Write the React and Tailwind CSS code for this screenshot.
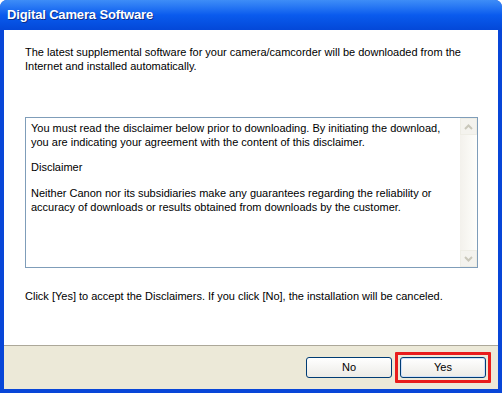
export default function App() {
  const font = { fontFamily: "'Liberation Sans', Arial, sans-serif" };

  return (
    <div
      className="w-[502px] h-[393px] flex flex-col bg-[#0846D8] rounded-t-[7px] overflow-hidden text-[11px] text-black"
      style={font}
    >
      {/* title bar */}
      <div className="h-[30px] flex items-center pl-[7px] bg-gradient-to-b from-[#3E8DF7] via-[#0A5BEE] to-[#0448D8]">
        <span className="text-white font-bold text-[13px] tracking-[-0.15px] [text-shadow:1px_1px_0_#0B2E8A]">
          Digital Camera Software
        </span>
      </div>

      <div className="flex-1 flex flex-col mx-[4px] mb-[4px]">
        {/* body */}
        <div className="flex-1 bg-white flex flex-col pl-[21px] pr-[20px] whitespace-nowrap">
          <p className="mt-[15px] leading-[14px]">
            The latest supplemental software for your camera/camcorder will be downloaded from the
            <br />
            Internet and installed automatically.
          </p>

          <div className="mt-[44px] h-[151px] border border-[#7F9DB9] flex">
            <div className="flex-1 pl-[5px] pt-[3px] leading-[14px]">
              <p>
                You must read the disclaimer below prior to downloading. By initiating the download,
                <br />
                you are indicating your agreement with the content of this disclaimer.
              </p>
              <p className="mt-[11px]">Disclaimer</p>
              <p className="mt-[12px]">
                Neither Canon nor its subsidiaries make any guarantees regarding the reliability or
                <br />
                accuracy of downloads or results obtained from downloads by the customer.
              </p>
            </div>
            <div className="w-[17px] flex flex-col bg-gradient-to-r from-[#F3F1EC] to-[#FEFEFB]">
              <div className="h-[17px] border border-[#EEEDE5] bg-[#F4F3EE] flex items-center justify-center">
                <svg width="9" height="6" viewBox="0 0 9 6">
                  <path d="M1 5 L4.5 1.5 L8 5" fill="none" stroke="#C9C7BA" strokeWidth="2" />
                </svg>
              </div>
              <div className="flex-1" />
              <div className="h-[17px] border border-[#EEEDE5] bg-[#F4F3EE] flex items-center justify-center">
                <svg width="9" height="6" viewBox="0 0 9 6">
                  <path d="M1 1 L4.5 4.5 L8 1" fill="none" stroke="#C9C7BA" strokeWidth="2" />
                </svg>
              </div>
            </div>
          </div>

          <p className="mt-[21px] leading-[14px]">
            Click [Yes] to accept the Disclaimers. If you click [No], the installation will be canceled.
          </p>
        </div>

        {/* footer */}
        <div className="h-[44px] bg-[#ECE9D8] border-t border-[#ACA899] flex items-center justify-end pr-[7px] gap-[3px]">
          <button className="w-[86px] h-[21px] rounded-[3px] border border-[#003C74] bg-gradient-to-b from-[#FFFFFF] to-[#ECEBE6] text-[11px]">
            No
          </button>
          <div className="border-[3px] border-[#E81C1C] p-[2px] rounded-[1px]">
            <button className="w-[86px] h-[21px] rounded-[3px] border border-[#003C74] bg-gradient-to-b from-[#FFFFFF] to-[#ECEBE6] text-[11px] shadow-[inset_0_0_0_1px_#CFE0FA]">
              Yes
            </button>
          </div>
        </div>
      </div>
    </div>
  );
}
